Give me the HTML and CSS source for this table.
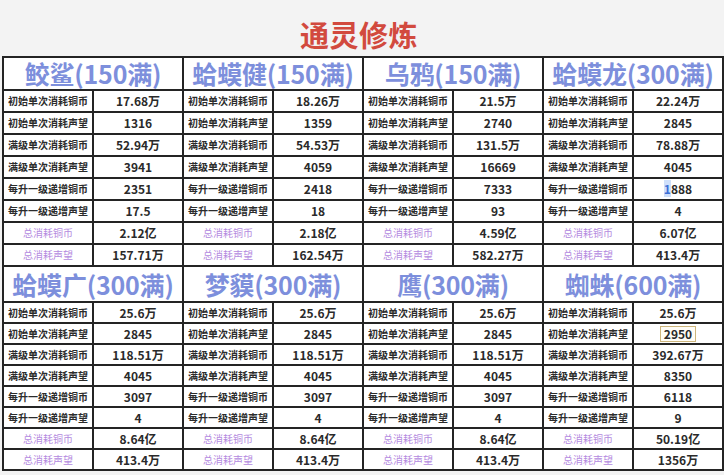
FILE: index.html
```html
<!DOCTYPE html>
<html lang="zh">
<head>
<meta charset="utf-8">
<link rel="stylesheet" href="styles.css">
</head>
<body>
<div class="page">
  <h1 class="title">通灵修炼</h1>
  <table class="grid">
    <colgroup>
      <col class="c"><col class="c"><col class="c"><col class="c"><col class="c"><col class="c"><col class="c"><col class="c">
    </colgroup>
    <tbody>
      <tr class="head top">
        <th colspan="2"><span class="hname">鲛鲨(150满)</span></th>
        <th colspan="2"><span class="hname">蛤蟆健(150满)</span></th>
        <th colspan="2"><span class="hname">乌鸦(150满)</span></th>
        <th colspan="2"><span class="hname">蛤蟆龙(300满)</span></th>
      </tr>
      <tr class="row r1">
        <td class="lbl">初始单次消耗铜币</td><td class="val">17.68万</td>
        <td class="lbl">初始单次消耗铜币</td><td class="val">18.26万</td>
        <td class="lbl">初始单次消耗铜币</td><td class="val">21.5万</td>
        <td class="lbl">初始单次消耗铜币</td><td class="val">22.24万</td>
      </tr>
      <tr class="row r1">
        <td class="lbl">初始单次消耗声望</td><td class="val">1316</td>
        <td class="lbl">初始单次消耗声望</td><td class="val">1359</td>
        <td class="lbl">初始单次消耗声望</td><td class="val">2740</td>
        <td class="lbl">初始单次消耗声望</td><td class="val">2845</td>
      </tr>
      <tr class="row r1">
        <td class="lbl">满级单次消耗铜币</td><td class="val">52.94万</td>
        <td class="lbl">满级单次消耗铜币</td><td class="val">54.53万</td>
        <td class="lbl">满级单次消耗铜币</td><td class="val">131.5万</td>
        <td class="lbl">满级单次消耗铜币</td><td class="val">78.88万</td>
      </tr>
      <tr class="row r1">
        <td class="lbl">满级单次消耗声望</td><td class="val">3941</td>
        <td class="lbl">满级单次消耗声望</td><td class="val">4059</td>
        <td class="lbl">满级单次消耗声望</td><td class="val">16669</td>
        <td class="lbl">满级单次消耗声望</td><td class="val">4045</td>
      </tr>
      <tr class="row r1">
        <td class="lbl">每升一级递增铜币</td><td class="val">2351</td>
        <td class="lbl">每升一级递增铜币</td><td class="val">2418</td>
        <td class="lbl">每升一级递增铜币</td><td class="val">7333</td>
        <td class="lbl">每升一级递增铜币</td><td class="val"><span class="cursor">1</span>888</td>
      </tr>
      <tr class="row r1">
        <td class="lbl">每升一级递增声望</td><td class="val">17.5</td>
        <td class="lbl">每升一级递增声望</td><td class="val">18</td>
        <td class="lbl">每升一级递增声望</td><td class="val">93</td>
        <td class="lbl">每升一级递增声望</td><td class="val">4</td>
      </tr>
      <tr class="row r1">
        <td class="lbl total">总消耗铜币</td><td class="val">2.12亿</td>
        <td class="lbl total">总消耗铜币</td><td class="val">2.18亿</td>
        <td class="lbl total">总消耗铜币</td><td class="val">4.59亿</td>
        <td class="lbl total">总消耗铜币</td><td class="val">6.07亿</td>
      </tr>
      <tr class="row r1">
        <td class="lbl total">总消耗声望</td><td class="val">157.71万</td>
        <td class="lbl total">总消耗声望</td><td class="val">162.54万</td>
        <td class="lbl total">总消耗声望</td><td class="val">582.27万</td>
        <td class="lbl total">总消耗声望</td><td class="val">413.4万</td>
      </tr>
      <tr class="head second">
        <th colspan="2"><span class="hname">蛤蟆广(300满)</span></th>
        <th colspan="2"><span class="hname">梦貘(300满)</span></th>
        <th colspan="2"><span class="hname">鹰(300满)</span></th>
        <th colspan="2"><span class="hname">蜘蛛(600满)</span></th>
      </tr>
      <tr class="row r2">
        <td class="lbl">初始单次消耗铜币</td><td class="val">25.6万</td>
        <td class="lbl">初始单次消耗铜币</td><td class="val">25.6万</td>
        <td class="lbl">初始单次消耗铜币</td><td class="val">25.6万</td>
        <td class="lbl">初始单次消耗铜币</td><td class="val">25.6万</td>
      </tr>
      <tr class="row r2">
        <td class="lbl">初始单次消耗声望</td><td class="val">2845</td>
        <td class="lbl">初始单次消耗声望</td><td class="val">2845</td>
        <td class="lbl">初始单次消耗声望</td><td class="val">2845</td>
        <td class="lbl">初始单次消耗声望</td><td class="val"><span class="picked">2950</span></td>
      </tr>
      <tr class="row r2">
        <td class="lbl">满级单次消耗铜币</td><td class="val">118.51万</td>
        <td class="lbl">满级单次消耗铜币</td><td class="val">118.51万</td>
        <td class="lbl">满级单次消耗铜币</td><td class="val">118.51万</td>
        <td class="lbl">满级单次消耗铜币</td><td class="val">392.67万</td>
      </tr>
      <tr class="row r2">
        <td class="lbl">满级单次消耗声望</td><td class="val">4045</td>
        <td class="lbl">满级单次消耗声望</td><td class="val">4045</td>
        <td class="lbl">满级单次消耗声望</td><td class="val">4045</td>
        <td class="lbl">满级单次消耗声望</td><td class="val">8350</td>
      </tr>
      <tr class="row r2">
        <td class="lbl">每升一级递增铜币</td><td class="val">3097</td>
        <td class="lbl">每升一级递增铜币</td><td class="val">3097</td>
        <td class="lbl">每升一级递增铜币</td><td class="val">3097</td>
        <td class="lbl">每升一级递增铜币</td><td class="val">6118</td>
      </tr>
      <tr class="row r2">
        <td class="lbl">每升一级递增声望</td><td class="val">4</td>
        <td class="lbl">每升一级递增声望</td><td class="val">4</td>
        <td class="lbl">每升一级递增声望</td><td class="val">4</td>
        <td class="lbl">每升一级递增声望</td><td class="val">9</td>
      </tr>
      <tr class="row r2">
        <td class="lbl total">总消耗铜币</td><td class="val">8.64亿</td>
        <td class="lbl total">总消耗铜币</td><td class="val">8.64亿</td>
        <td class="lbl total">总消耗铜币</td><td class="val">8.64亿</td>
        <td class="lbl total">总消耗铜币</td><td class="val">50.19亿</td>
      </tr>
      <tr class="row r2">
        <td class="lbl total">总消耗声望</td><td class="val">413.4万</td>
        <td class="lbl total">总消耗声望</td><td class="val">413.4万</td>
        <td class="lbl total">总消耗声望</td><td class="val">413.4万</td>
        <td class="lbl total">总消耗声望</td><td class="val">1356万</td>
      </tr>
    </tbody>
  </table>
</div>
</body>
</html>
```

FILE: styles.css
```css
html, body {
  margin: 0;
  padding: 0;
  background: #f3f3f3;
}

.page {
  width: 724px;
  height: 475px;
  overflow: hidden;
  padding: 0 2px;
  box-sizing: border-box;
  font-family: "Noto Sans CJK SC", "Noto Sans", sans-serif;
}

.title {
  margin: 0;
  height: 56px;
  display: flex;
  align-items: flex-end;
  justify-content: center;
  padding: 0 6px 4px 0;
  box-sizing: border-box;
  font-size: 29px;
  line-height: 1.2;
  font-weight: 700;
  color: #d24a3e;
  letter-spacing: 0.5px;
}

.grid {
  width: 720px;
  border-collapse: collapse;
  table-layout: fixed;
  background: #fff;
  border: 2px solid #1e1e1e;
}

.grid .c {
  width: 90px;
}

.grid th,
.grid td {
  border: 2px solid #242424;
  padding: 0;
  text-align: center;
  vertical-align: middle;
  white-space: nowrap;
}

.head th {
  font-size: 25px;
  line-height: 1;
  font-weight: 700;
  color: #7d8fdc;
}

.hname {
  display: inline-block;
  letter-spacing: -0.2px;
}

.head.top {
  height: 33px;
}

.head.second {
  height: 36px;
}

.row.r1 {
  height: 22px;
}

.row.r2 {
  height: 21px;
}

.lbl {
  font-size: 10px;
  line-height: 1;
  font-weight: 700;
  color: #2c2c2c;
}

.lbl.total {
  font-weight: 400;
  color: #b48ae0;
}

.val {
  font-size: 12px;
  line-height: 1;
  font-weight: 700;
  color: #2a2a2a;
}

.cursor {
  color: #3d6fd6;
  background: #cfe0fb;
}

.picked {
  display: inline-block;
  padding: 1px 3px;
  border: 1px solid #cdb67c;
  background: #fffdf6;
}
```
